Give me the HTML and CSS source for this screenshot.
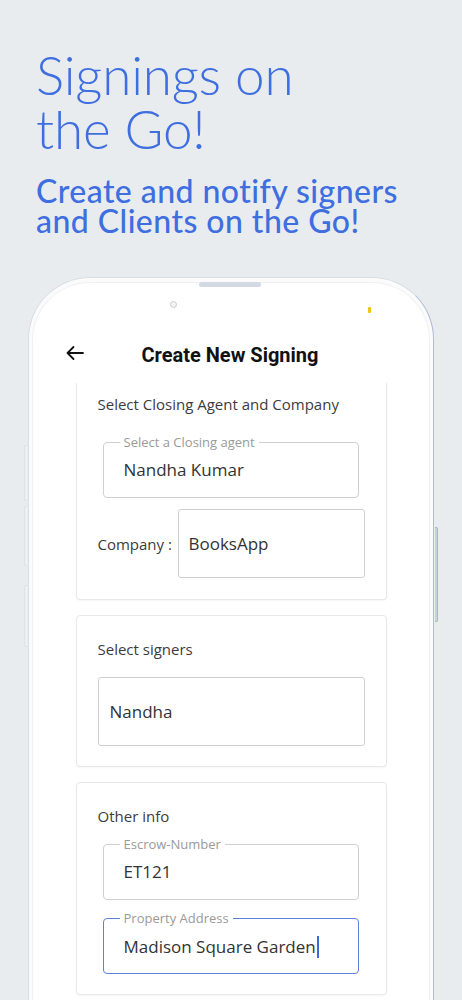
FILE: index.html
```html
<!DOCTYPE html>
<html lang="en">
<head>
<meta charset="utf-8">
<title>Signings on the Go!</title>
<link rel="stylesheet" href="styles.css">
</head>
<body>
<div class="page">
  <header class="hero">
    <h1 class="hero-title">Signings on<br>the Go!</h1>
    <h2 class="hero-sub">Create and notify signers<br>and Clients on the Go!</h2>
  </header>

  <div class="phone">
    <span class="btn-left btn-left-1"></span>
    <span class="btn-left btn-left-2"></span>
    <span class="btn-left btn-left-3"></span>
    <span class="btn-right"></span>
    <div class="screen">
      <span class="speaker"></span>
      <span class="camera"></span>
      <span class="led"></span>
      <div class="status"></div>
      <div class="appbar">
        <svg class="back" viewBox="0 0 24 24" width="24" height="24" aria-hidden="true">
          <path d="M20 12H4.5M10.5 6l-6 6 6 6" fill="none" stroke="#111" stroke-width="1.8" stroke-linecap="round" stroke-linejoin="round"/>
        </svg>
        <div class="appbar-title">Create New Signing</div>
      </div>
      <div class="content">
        <section class="card card-clipped">
          <div class="card-title">Select Closing Agent and Company</div>
          <fieldset class="field field-first">
            <legend>Select a Closing agent</legend>
            <div class="field-value">Nandha Kumar</div>
          </fieldset>
          <div class="company-row">
            <span class="company-label">Company :</span>
            <div class="box box-company">BooksApp</div>
          </div>
        </section>

        <section class="card card-signers">
          <div class="card-title">Select signers</div>
          <div class="box box-signers">Nandha</div>
        </section>

        <section class="card card-other">
          <div class="card-title">Other info</div>
          <fieldset class="field field-escrow">
            <legend>Escrow-Number</legend>
            <div class="field-value">ET121</div>
          </fieldset>
          <fieldset class="field field-focused">
            <legend>Property Address</legend>
            <div class="field-value">Madison Square Garden<span class="caret"></span></div>
          </fieldset>
        </section>
      </div>
    </div>
  </div>
</div>
</body>
</html>
```

FILE: styles.css
```css
* { box-sizing: border-box; }

html, body {
  margin: 0;
  padding: 0;
}

body {
  background: #e9ecee;
  width: 462px;
  height: 1000px;
  overflow: hidden;
}

.page {
  width: 462px;
  height: 1000px;
  overflow: hidden;
}

.hero {
  padding: 48px 0 0 36px;
}

.hero-title {
  margin: 0;
  font-family: Lato, "Liberation Sans", sans-serif;
  font-weight: 300;
  font-size: 53px;
  line-height: 54px;
  color: #3e6ee0;
  letter-spacing: -0.2px;
}

.hero-sub {
  margin: 20px 0 0 0;
  font-family: Lato, "Liberation Sans", sans-serif;
  font-weight: 500;
  font-size: 32px;
  line-height: 30px;
  letter-spacing: 0.45px;
  color: #3e6ee0;
}

.phone {
  position: relative;
  margin: 41px 0 0 28px;
  width: 406px;
  height: 760px;
  background: #fbfbfc;
  border: 1.5px solid #d9dee5;
  border-right-color: #aebbd2;
  border-bottom: none;
  border-radius: 62px 62px 0 0;
  padding: 4px 3px 0 3px;
}

.btn-left {
  position: absolute;
  left: -5px;
  width: 3px;
  background: #eef0f2;
  border: 1px solid #dde1e6;
  border-right: none;
  border-radius: 2px 0 0 2px;
}
.btn-left-1 { top: 167px; height: 56px; }
.btn-left-2 { top: 228px; height: 60px; }
.btn-left-3 { top: 307px; height: 62px; }

.btn-right {
  position: absolute;
  right: -5px;
  top: 249px;
  width: 3px;
  height: 95px;
  background: #c9d2e2;
  border: 1px solid #a8b6ce;
  border-left: none;
  border-radius: 0 2px 2px 0;
}

.screen {
  position: relative;
  height: 100%;
  background: #ffffff;
  border: 1px solid #eef0f3;
  border-bottom: none;
  border-radius: 58px 58px 0 0;
}

.speaker {
  position: absolute;
  top: -1px;
  left: 166px;
  width: 62px;
  height: 5px;
  background: #d3d9e3;
  border-radius: 3px;
}

.camera {
  position: absolute;
  top: 18px;
  left: 137px;
  width: 7px;
  height: 7px;
  border-radius: 50%;
  border: 1.5px solid #c9ccd2;
  background: #f3f4f6;
}

.led {
  position: absolute;
  top: 24px;
  left: 335px;
  width: 3px;
  height: 6px;
  border-radius: 1px;
  background: #f2c21b;
}

.status {
  height: 43px;
}

.appbar {
  position: relative;
  height: 57px;
  display: flex;
  align-items: center;
  justify-content: center;
}

.back {
  position: absolute;
  left: 30px;
  top: 15px;
}

.appbar-title {
  font-family: Roboto, "Liberation Sans", sans-serif;
  font-weight: 700;
  font-size: 20px;
  color: #111;
  margin-left: -2px;
}

.content {
  padding: 0 42.5px;
  display: flex;
  flex-direction: column;
  gap: 15px;
  font-family: "Open Sans", "Liberation Sans", sans-serif;
}

.card {
  background: #fff;
  border: 1px solid #e7e8ea;
  border-radius: 4px;
  box-shadow: 0 1px 2px rgba(0, 0, 0, 0.04);
  padding: 23px 21px 20px 21px;
}

.card-clipped {
  border-top: none;
  border-radius: 0 0 4px 4px;
  padding-top: 11px;
  padding-bottom: 21px;
}

.card-title {
  font-size: 15px;
  line-height: 20px;
  color: #3c3c3c;
}

.field {
  margin: 0 6px 0 5px;
  padding: 0 16px 15px 16px;
  border: 1px solid #cfd0d3;
  border-radius: 4px;
  min-width: 0;
}

.field legend {
  padding: 0 4px;
  font-size: 13px;
  line-height: 17px;
  color: #9a9a9a;
}

.field-value {
  padding: 7.5px 4px 0 4px;
  font-size: 17px;
  line-height: 24px;
  color: #333;
}

.field-first { margin-top: 19.5px; }
.field-escrow { margin-top: 9.5px; }
.field-focused {
  margin-top: 10px;
  padding-bottom: 14px;
  border-color: #5d80d8;
  border-width: 1.5px;
}

.caret {
  display: inline-block;
  width: 2px;
  height: 22px;
  background: #3f67d6;
  vertical-align: -5px;
  margin-left: 1px;
}

.company-row {
  display: flex;
  align-items: center;
  margin-top: 11px;
}

.company-label {
  font-size: 15px;
  color: #3c3c3c;
  width: 80px;
  flex: none;
}

.box {
  border: 1px solid #cfd0d3;
  border-radius: 3px;
  font-size: 17px;
  color: #333;
  display: flex;
  align-items: center;
  height: 69px;
}

.box-company {
  flex: 1;
  padding-left: 10px;
}

.box-signers {
  margin-top: 18px;
  padding-left: 11px;
}
```
